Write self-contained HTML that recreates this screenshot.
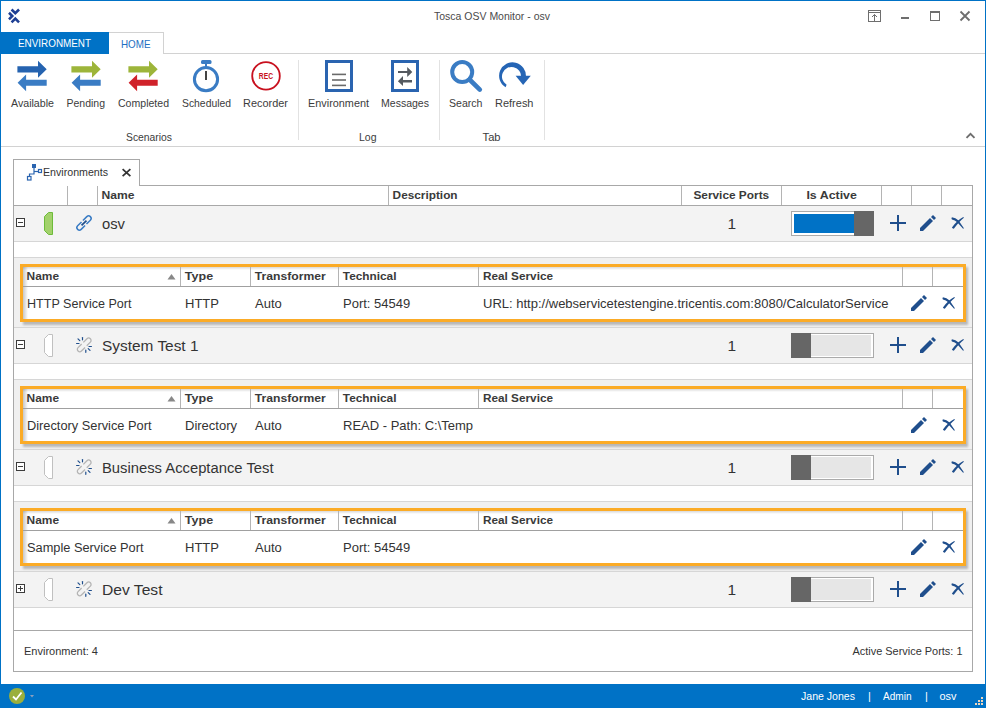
<!DOCTYPE html>
<html><head><meta charset="utf-8"><style>
html,body{margin:0;padding:0;width:986px;height:708px;overflow:hidden;background:#fff}
svg{display:block}
text{font-family:"Liberation Sans", sans-serif}
</style></head><body>
<svg width="986" height="708" viewBox="0 0 986 708">
<defs><filter id="sh" x="-5%" y="-20%" width="110%" height="150%"><feGaussianBlur stdDeviation="1.3"/></filter>
<linearGradient id="gl" x1="0" y1="0" x2="1" y2="0"><stop offset="0" stop-color="#000" stop-opacity="0.22"/><stop offset="1" stop-color="#000" stop-opacity="0"/></linearGradient>
<linearGradient id="gt" x1="0" y1="0" x2="0" y2="1"><stop offset="0" stop-color="#000" stop-opacity="0.15"/><stop offset="1" stop-color="#000" stop-opacity="0"/></linearGradient>
</defs>
<rect x="0" y="0" width="986" height="708" fill="#ffffff" />
<g fill="none" stroke="#1e3f94" stroke-width="2.2" transform="translate(14.6,15.9) scale(1.17) translate(-14.6,-15.9)"><path d="M12,10.4 L15.2,13.6 L18.4,10.4"/><path d="M9.8,13.2 L12.6,16 L9.8,18.8"/><path d="M12,21.4 L15.2,18.2 L18.4,21.4"/></g>
<text x="434" y="20" font-size="11" fill="#4a4a4a" textLength="116" lengthAdjust="spacingAndGlyphs" >Tosca OSV Monitor - osv</text>
<g fill="none" stroke="#6e6e6e" stroke-width="1"><rect x="868.5" y="10.5" width="12" height="11"/><line x1="868.5" y1="12.5" x2="880.5" y2="12.5"/><line x1="874.5" y1="14.5" x2="874.5" y2="21.5"/><path d="M872,17 L874.5,14.5 L877,17"/><rect x="930.5" y="12.5" width="9" height="8"/></g>
<rect x="901" y="17" width="8" height="2" fill="#6e6e6e" />
<rect x="930" y="11" width="10" height="2" fill="#6e6e6e" />
<path d="M960.5,11.5 L969.5,20.5 M969.5,11.5 L960.5,20.5" stroke="#6e6e6e" stroke-width="1.8"/>
<rect x="1" y="32" width="108" height="22" fill="#0072c6" />
<text x="18" y="47" font-size="11" fill="#ffffff" textLength="73" lengthAdjust="spacingAndGlyphs" >ENVIRONMENT</text>
<rect x="164" y="53" width="821" height="1" fill="#d2d2d2"/>
<rect x="163" y="32" width="1" height="22" fill="#d2d2d2"/>
<rect x="109" y="32" width="55" height="1" fill="#d2d2d2"/>
<text x="121" y="48" font-size="11" fill="#1e6fc2" textLength="29.5" lengthAdjust="spacingAndGlyphs" >HOME</text>
<rect x="1" y="146" width="984" height="1" fill="#d2d2d2"/>
<rect x="298" y="60" width="1" height="80" fill="#e2e2e2"/>
<rect x="439" y="60" width="1" height="80" fill="#e2e2e2"/>
<rect x="544" y="60" width="1" height="80" fill="#e2e2e2"/>
<path d="M966.5,137.8 L970.5,133.8 L974.5,137.8" fill="none" stroke="#6e6e6e" stroke-width="1.9"/>
<path transform="translate(17,60)" fill="#2563b0" d="M0.4,6.2 H21 V0.8 L29.7,9.3 L21,17.8 V12.5 H0.4 Z"/>
<path transform="translate(17,60)" fill="#3a7cc4" d="M29.7,19.7 H9.1 V14.4 L0.6,22.7 L9.1,31.3 V25.8 H29.7 Z"/>
<path transform="translate(71,60)" fill="#9db53a" d="M0.4,6.2 H21 V0.8 L29.7,9.3 L21,17.8 V12.5 H0.4 Z"/>
<path transform="translate(71,60)" fill="#3a7cc4" d="M29.7,19.7 H9.1 V14.4 L0.6,22.7 L9.1,31.3 V25.8 H29.7 Z"/>
<path transform="translate(128,60)" fill="#9db53a" d="M0.4,6.2 H21 V0.8 L29.7,9.3 L21,17.8 V12.5 H0.4 Z"/>
<path transform="translate(128,60)" fill="#d0222a" d="M29.7,19.7 H9.1 V14.4 L0.6,22.7 L9.1,31.3 V25.8 H29.7 Z"/>
<circle cx="206" cy="79.2" r="11.6" fill="none" stroke="#3a7cc4" stroke-width="3"/>
<rect x="201" y="60" width="10.5" height="4" rx="1.5" fill="#3a7cc4"/>
<rect x="205" y="63" width="2" height="4" fill="#3a7cc4" />
<rect x="205" y="71" width="2" height="9" fill="#444444" />
<circle cx="266" cy="75.9" r="13.8" fill="none" stroke="#c8101e" stroke-width="1.8"/>
<text x="258.8" y="79" font-size="8.5" fill="#c8101e" font-weight="bold" textLength="14.2" lengthAdjust="spacingAndGlyphs" >REC</text>
<rect x="326.5" y="61.5" width="25" height="29" fill="none" stroke="#2a64b0" stroke-width="3"/>
<g stroke="#6a6a6a" stroke-width="1.6"><line x1="332" y1="74.4" x2="346" y2="74.4"/><line x1="332" y1="80" x2="346" y2="80"/><line x1="332" y1="85.4" x2="346" y2="85.4"/></g>
<rect x="392.5" y="61.5" width="25" height="29" fill="none" stroke="#2a64b0" stroke-width="3"/>
<g fill="#555a60"><path d="M398,71 H407.2 V67 L412.3,72 L407.2,77 V73 H398 Z"/><path d="M412,80 H403 V76 L397.9,81.2 L403,86 V82.6 H412 Z"/></g>
<circle cx="462.2" cy="72.1" r="10" fill="none" stroke="#3a7cc4" stroke-width="4"/>
<path d="M469.5,79.5 L479.8,89.6" stroke="#3a7cc4" stroke-width="4.6" stroke-linecap="round"/>
<path fill="#2565b5" d="M525.85,77 A13.4,13.4 0 1 0 505.6,87.2 L506.6,84.8 A9.6,9.6 0 1 1 521.15,77.2 Z"/><path fill="#2565b5" d="M515.6,75.8 L530.8,75.8 L523.1,84.9 Z"/>
<text x="11" y="107" font-size="11" fill="#3c3c3c" textLength="43" lengthAdjust="spacingAndGlyphs" >Available</text>
<text x="66.5" y="107" font-size="11" fill="#3c3c3c" textLength="38.5" lengthAdjust="spacingAndGlyphs" >Pending</text>
<text x="118" y="107" font-size="11" fill="#3c3c3c" textLength="51" lengthAdjust="spacingAndGlyphs" >Completed</text>
<text x="182" y="107" font-size="11" fill="#3c3c3c" textLength="49" lengthAdjust="spacingAndGlyphs" >Scheduled</text>
<text x="243" y="107" font-size="11" fill="#3c3c3c" textLength="45" lengthAdjust="spacingAndGlyphs" >Recorder</text>
<text x="308" y="107" font-size="11" fill="#3c3c3c" textLength="61" lengthAdjust="spacingAndGlyphs" >Environment</text>
<text x="381" y="107" font-size="11" fill="#3c3c3c" textLength="48" lengthAdjust="spacingAndGlyphs" >Messages</text>
<text x="449" y="107" font-size="11" fill="#3c3c3c" textLength="33.5" lengthAdjust="spacingAndGlyphs" >Search</text>
<text x="495" y="107" font-size="11" fill="#3c3c3c" textLength="38.5" lengthAdjust="spacingAndGlyphs" >Refresh</text>
<text x="126" y="140.6" font-size="11" fill="#3c3c3c" textLength="46" lengthAdjust="spacingAndGlyphs" >Scenarios</text>
<text x="359" y="140.6" font-size="11" fill="#3c3c3c" textLength="17.5" lengthAdjust="spacingAndGlyphs" >Log</text>
<text x="482.6" y="140.6" font-size="11" fill="#3c3c3c" textLength="18" lengthAdjust="spacingAndGlyphs" >Tab</text>
<rect x="13" y="159" width="1" height="513" fill="#a8a8a8"/>
<rect x="13" y="159" width="127" height="1" fill="#a8a8a8"/>
<rect x="139" y="159" width="1" height="27" fill="#a8a8a8"/>
<rect x="139" y="185" width="834" height="1" fill="#a8a8a8"/>
<rect x="972" y="185" width="1" height="487" fill="#a8a8a8"/>
<g fill="none" stroke="#2a64b0" stroke-width="1.2"><path d="M34,168 V174 H29.5 V176.5"/><path d="M34,171.5 H38.5"/><rect x="27.5" y="176.5" width="3.5" height="3.5"/><rect x="38.5" y="169.5" width="3" height="3"/></g>
<rect x="32" y="164" width="4" height="4" fill="#2a64b0" />
<text x="43" y="176" font-size="11" fill="#333" textLength="65" lengthAdjust="spacingAndGlyphs" >Environments</text>
<path d="M122.6,169.2 L130.4,176.2 M130.4,169.2 L122.6,176.2" stroke="#333" stroke-width="1.75"/>
<rect x="13" y="205" width="960" height="1" fill="#a8a8a8"/>
<rect x="67" y="186" width="1" height="19" fill="#b4b4b4"/>
<rect x="97" y="186" width="1" height="19" fill="#b4b4b4"/>
<rect x="388" y="186" width="1" height="19" fill="#b4b4b4"/>
<rect x="681" y="186" width="1" height="19" fill="#b4b4b4"/>
<rect x="781" y="186" width="1" height="19" fill="#b4b4b4"/>
<rect x="881" y="186" width="1" height="19" fill="#b4b4b4"/>
<rect x="911" y="186" width="1" height="19" fill="#b4b4b4"/>
<rect x="941" y="186" width="1" height="19" fill="#b4b4b4"/>
<text x="101.6" y="199" font-size="11" fill="#3a3a3a" font-weight="bold" textLength="33" lengthAdjust="spacingAndGlyphs" >Name</text>
<text x="392.6" y="199" font-size="11" fill="#3a3a3a" font-weight="bold" textLength="65" lengthAdjust="spacingAndGlyphs" >Description</text>
<text x="693.4" y="199" font-size="11" fill="#3a3a3a" font-weight="bold" textLength="75.8" lengthAdjust="spacingAndGlyphs" >Service Ports</text>
<text x="806.4" y="199" font-size="11" fill="#3a3a3a" font-weight="bold" textLength="50.5" lengthAdjust="spacingAndGlyphs" >Is Active</text>
<rect x="14" y="206" width="958" height="35" fill="#f3f3f3" />
<rect x="14" y="241" width="958" height="1" fill="#d6d6d6"/>
<rect x="16.5" y="218.5" width="8" height="8" fill="#fff" stroke="#3c3c3c"/>
<rect x="18" y="222" width="5" height="1" fill="#3c3c3c" />
<path d="M48.5,212.5 H52.5 V234.5 H48.5 L44.5,230.5 V216.5 Z" fill="#a2d16b" stroke="#6dbb3a" stroke-width="1"/>
<g transform="translate(84,223) rotate(-45)" fill="none"><path d="M1,-2.5 H6.5 A2.5,2.5 0 0 1 6.5,2.5 H1" stroke="#3a7cc4" stroke-width="1.5"/><path d="M-1,2.5 H-6.5 A2.5,2.5 0 0 1 -6.5,-2.5 H-1" stroke="#3a7cc4" stroke-width="1.5"/><path d="M-3.5,0 H3.5" stroke="#1f4e8c" stroke-width="1.7"/></g>
<text x="102" y="228.6" font-size="15.5" fill="#333333" textLength="23" lengthAdjust="spacingAndGlyphs" >osv</text>
<text x="731.8" y="229" font-size="15.5" fill="#333333" text-anchor="middle" >1</text>
<rect x="791.5" y="211.5" width="82" height="24" fill="#ffffff" stroke="#aaaaaa"/>
<rect x="794" y="214" width="60" height="19" fill="#0072c6" />
<rect x="854" y="211" width="20" height="25" fill="#666666" />
<rect x="890" y="222" width="16" height="2" fill="#1f4e8c" />
<rect x="897" y="215" width="2" height="16" fill="#1f4e8c" />
<g transform="translate(920,215)" fill="#1f4e8c"><path d="M0,13 L0,16 L3,16 L13,6 L10,3 Z"/><path d="M11,2 L13,0 L16,3 L14,5 Z"/></g>
<g transform="translate(0,0)" fill="#1f4e8c"><path d="M951.9,217.2 Q955.5,217.4 958.6,220.4 L963.9,228.2 L963.1,228.8 L957.2,222.2 Q955,220 951.9,219.5 Q951,218.4 951.9,217.2 Z"/><path d="M963.3,216.9 L963.9,217.7 Q959.5,221 954,228.6 Q952.8,229.2 951.9,227.6 Q956.5,220.5 963.3,216.9 Z"/></g>
<rect x="14" y="257" width="958" height="1" fill="#d6d6d6"/>
<rect x="14" y="258" width="958" height="69" fill="#f0f0f0" />
<rect x="14" y="327" width="958" height="1" fill="#d6d6d6"/>
<rect x="23" y="267" width="945" height="58" fill="#a0a0a0"  filter="url(#sh)" opacity="0.7"/>
<rect x="20" y="264" width="946" height="58" fill="#fbab26" />
<rect x="23" y="267" width="940" height="52" fill="#ffffff" />
<rect x="23" y="267" width="5" height="52" fill="url(#gl)" />
<rect x="23" y="267" width="940" height="3" fill="url(#gt)" />
<rect x="23" y="286" width="940" height="1" fill="#a0a0a0"/>
<rect x="180" y="267" width="1" height="19" fill="#b4b4b4"/>
<rect x="250" y="267" width="1" height="19" fill="#b4b4b4"/>
<rect x="338" y="267" width="1" height="19" fill="#b4b4b4"/>
<rect x="478" y="267" width="1" height="19" fill="#b4b4b4"/>
<rect x="902" y="267" width="1" height="19" fill="#b4b4b4"/>
<rect x="932" y="267" width="1" height="19" fill="#b4b4b4"/>
<text x="26.6" y="280.1" font-size="11" fill="#3a3a3a" font-weight="bold" textLength="32.5" lengthAdjust="spacingAndGlyphs" >Name</text>
<path d="M167.5,279.5 L171.5,274 L175.5,279.5 Z" fill="#888"/>
<text x="184.8" y="280.1" font-size="11" fill="#3a3a3a" font-weight="bold" textLength="28.3" lengthAdjust="spacingAndGlyphs" >Type</text>
<text x="254.8" y="280.1" font-size="11" fill="#3a3a3a" font-weight="bold" textLength="71" lengthAdjust="spacingAndGlyphs" >Transformer</text>
<text x="342.8" y="280.1" font-size="11" fill="#3a3a3a" font-weight="bold" textLength="53.7" lengthAdjust="spacingAndGlyphs" >Technical</text>
<text x="483" y="280.1" font-size="11" fill="#3a3a3a" font-weight="bold" textLength="70" lengthAdjust="spacingAndGlyphs" >Real Service</text>
<text x="27" y="308.3" font-size="12.5" fill="#333333" textLength="104.5" lengthAdjust="spacingAndGlyphs" >HTTP Service Port</text>
<text x="185" y="308.3" font-size="13" fill="#333333" >HTTP</text>
<text x="255" y="308.3" font-size="13" fill="#333333" >Auto</text>
<text x="343" y="308.3" font-size="13" fill="#333333" >Port: 54549</text>
<text x="483" y="308.3" font-size="13" fill="#333333" >URL: http://webservicetestengine.tricentis.com:8080/CalculatorService</text>
<g transform="translate(911,295)" fill="#1f4e8c"><path d="M0,13 L0,16 L3,16 L13,6 L10,3 Z"/><path d="M11,2 L13,0 L16,3 L14,5 Z"/></g>
<g transform="translate(-9,80)" fill="#1f4e8c"><path d="M951.9,217.2 Q955.5,217.4 958.6,220.4 L963.9,228.2 L963.1,228.8 L957.2,222.2 Q955,220 951.9,219.5 Q951,218.4 951.9,217.2 Z"/><path d="M963.3,216.9 L963.9,217.7 Q959.5,221 954,228.6 Q952.8,229.2 951.9,227.6 Q956.5,220.5 963.3,216.9 Z"/></g>
<rect x="14" y="328" width="958" height="35" fill="#f3f3f3" />
<rect x="14" y="363" width="958" height="1" fill="#d6d6d6"/>
<rect x="16.5" y="340.5" width="8" height="8" fill="#fff" stroke="#3c3c3c"/>
<rect x="18" y="344" width="5" height="1" fill="#3c3c3c" />
<path d="M48.5,334.5 H52.5 V356.5 H48.5 L44.5,352.5 V338.5 Z" fill="#ffffff" stroke="#c0c0c0" stroke-width="1"/>
<g transform="translate(84.2,344.9) rotate(-45)" fill="none" stroke="#b4b4b4" stroke-width="1.3"><path d="M1.2,-2.4 H6.3 A2.4,2.4 0 0 1 6.3,2.4 H1.2"/><path d="M-1.2,2.4 H-6.3 A2.4,2.4 0 0 1 -6.3,-2.4 H-1.2"/></g>
<g transform="translate(0,0)" stroke="#1f4e8c" stroke-width="1.2" stroke-linecap="round"><line x1="78" y1="338.8" x2="79.8" y2="340.6"/><line x1="82.5" y1="337.6" x2="82.5" y2="339.8"/><line x1="76.6" y1="343.5" x2="79" y2="343.5"/><line x1="89" y1="346.5" x2="91.4" y2="346.5"/><line x1="88.2" y1="348.6" x2="90" y2="350.4"/><line x1="85.8" y1="350" x2="85.8" y2="352.3"/></g>
<text x="102" y="350.6" font-size="15.5" fill="#333333" textLength="96.5" lengthAdjust="spacingAndGlyphs" >System Test 1</text>
<text x="731.8" y="351" font-size="15.5" fill="#333333" text-anchor="middle" >1</text>
<rect x="791.5" y="333.5" width="82" height="24" fill="#ffffff" stroke="#aaaaaa"/>
<rect x="811" y="335" width="60" height="21" fill="#e6e6e6" />
<rect x="791" y="333" width="20" height="25" fill="#666666" />
<rect x="890" y="344" width="16" height="2" fill="#1f4e8c" />
<rect x="897" y="337" width="2" height="16" fill="#1f4e8c" />
<g transform="translate(920,337)" fill="#1f4e8c"><path d="M0,13 L0,16 L3,16 L13,6 L10,3 Z"/><path d="M11,2 L13,0 L16,3 L14,5 Z"/></g>
<g transform="translate(0,122)" fill="#1f4e8c"><path d="M951.9,217.2 Q955.5,217.4 958.6,220.4 L963.9,228.2 L963.1,228.8 L957.2,222.2 Q955,220 951.9,219.5 Q951,218.4 951.9,217.2 Z"/><path d="M963.3,216.9 L963.9,217.7 Q959.5,221 954,228.6 Q952.8,229.2 951.9,227.6 Q956.5,220.5 963.3,216.9 Z"/></g>
<rect x="14" y="379" width="958" height="1" fill="#d6d6d6"/>
<rect x="14" y="380" width="958" height="69" fill="#f0f0f0" />
<rect x="14" y="449" width="958" height="1" fill="#d6d6d6"/>
<rect x="23" y="389" width="945" height="58" fill="#a0a0a0"  filter="url(#sh)" opacity="0.7"/>
<rect x="20" y="386" width="946" height="58" fill="#fbab26" />
<rect x="23" y="389" width="940" height="52" fill="#ffffff" />
<rect x="23" y="389" width="5" height="52" fill="url(#gl)" />
<rect x="23" y="389" width="940" height="3" fill="url(#gt)" />
<rect x="23" y="408" width="940" height="1" fill="#a0a0a0"/>
<rect x="180" y="389" width="1" height="19" fill="#b4b4b4"/>
<rect x="250" y="389" width="1" height="19" fill="#b4b4b4"/>
<rect x="338" y="389" width="1" height="19" fill="#b4b4b4"/>
<rect x="478" y="389" width="1" height="19" fill="#b4b4b4"/>
<rect x="902" y="389" width="1" height="19" fill="#b4b4b4"/>
<rect x="932" y="389" width="1" height="19" fill="#b4b4b4"/>
<text x="26.6" y="402.1" font-size="11" fill="#3a3a3a" font-weight="bold" textLength="32.5" lengthAdjust="spacingAndGlyphs" >Name</text>
<path d="M167.5,401.5 L171.5,396 L175.5,401.5 Z" fill="#888"/>
<text x="184.8" y="402.1" font-size="11" fill="#3a3a3a" font-weight="bold" textLength="28.3" lengthAdjust="spacingAndGlyphs" >Type</text>
<text x="254.8" y="402.1" font-size="11" fill="#3a3a3a" font-weight="bold" textLength="71" lengthAdjust="spacingAndGlyphs" >Transformer</text>
<text x="342.8" y="402.1" font-size="11" fill="#3a3a3a" font-weight="bold" textLength="53.7" lengthAdjust="spacingAndGlyphs" >Technical</text>
<text x="483" y="402.1" font-size="11" fill="#3a3a3a" font-weight="bold" textLength="70" lengthAdjust="spacingAndGlyphs" >Real Service</text>
<text x="27" y="430.3" font-size="12.5" fill="#333333" textLength="124.5" lengthAdjust="spacingAndGlyphs" >Directory Service Port</text>
<text x="185" y="430.3" font-size="13" fill="#333333" >Directory</text>
<text x="255" y="430.3" font-size="13" fill="#333333" >Auto</text>
<text x="343" y="430.3" font-size="13" fill="#333333" >READ - Path: C:\Temp</text>
<g transform="translate(911,417)" fill="#1f4e8c"><path d="M0,13 L0,16 L3,16 L13,6 L10,3 Z"/><path d="M11,2 L13,0 L16,3 L14,5 Z"/></g>
<g transform="translate(-9,202)" fill="#1f4e8c"><path d="M951.9,217.2 Q955.5,217.4 958.6,220.4 L963.9,228.2 L963.1,228.8 L957.2,222.2 Q955,220 951.9,219.5 Q951,218.4 951.9,217.2 Z"/><path d="M963.3,216.9 L963.9,217.7 Q959.5,221 954,228.6 Q952.8,229.2 951.9,227.6 Q956.5,220.5 963.3,216.9 Z"/></g>
<rect x="14" y="450" width="958" height="35" fill="#f3f3f3" />
<rect x="14" y="485" width="958" height="1" fill="#d6d6d6"/>
<rect x="16.5" y="462.5" width="8" height="8" fill="#fff" stroke="#3c3c3c"/>
<rect x="18" y="466" width="5" height="1" fill="#3c3c3c" />
<path d="M48.5,456.5 H52.5 V478.5 H48.5 L44.5,474.5 V460.5 Z" fill="#ffffff" stroke="#c0c0c0" stroke-width="1"/>
<g transform="translate(84.2,466.9) rotate(-45)" fill="none" stroke="#b4b4b4" stroke-width="1.3"><path d="M1.2,-2.4 H6.3 A2.4,2.4 0 0 1 6.3,2.4 H1.2"/><path d="M-1.2,2.4 H-6.3 A2.4,2.4 0 0 1 -6.3,-2.4 H-1.2"/></g>
<g transform="translate(0,122)" stroke="#1f4e8c" stroke-width="1.2" stroke-linecap="round"><line x1="78" y1="338.8" x2="79.8" y2="340.6"/><line x1="82.5" y1="337.6" x2="82.5" y2="339.8"/><line x1="76.6" y1="343.5" x2="79" y2="343.5"/><line x1="89" y1="346.5" x2="91.4" y2="346.5"/><line x1="88.2" y1="348.6" x2="90" y2="350.4"/><line x1="85.8" y1="350" x2="85.8" y2="352.3"/></g>
<text x="102" y="472.6" font-size="15.5" fill="#333333" textLength="171.5" lengthAdjust="spacingAndGlyphs" >Business Acceptance Test</text>
<text x="731.8" y="473" font-size="15.5" fill="#333333" text-anchor="middle" >1</text>
<rect x="791.5" y="455.5" width="82" height="24" fill="#ffffff" stroke="#aaaaaa"/>
<rect x="811" y="457" width="60" height="21" fill="#e6e6e6" />
<rect x="791" y="455" width="20" height="25" fill="#666666" />
<rect x="890" y="466" width="16" height="2" fill="#1f4e8c" />
<rect x="897" y="459" width="2" height="16" fill="#1f4e8c" />
<g transform="translate(920,459)" fill="#1f4e8c"><path d="M0,13 L0,16 L3,16 L13,6 L10,3 Z"/><path d="M11,2 L13,0 L16,3 L14,5 Z"/></g>
<g transform="translate(0,244)" fill="#1f4e8c"><path d="M951.9,217.2 Q955.5,217.4 958.6,220.4 L963.9,228.2 L963.1,228.8 L957.2,222.2 Q955,220 951.9,219.5 Q951,218.4 951.9,217.2 Z"/><path d="M963.3,216.9 L963.9,217.7 Q959.5,221 954,228.6 Q952.8,229.2 951.9,227.6 Q956.5,220.5 963.3,216.9 Z"/></g>
<rect x="14" y="501" width="958" height="1" fill="#d6d6d6"/>
<rect x="14" y="502" width="958" height="69" fill="#f0f0f0" />
<rect x="14" y="571" width="958" height="1" fill="#d6d6d6"/>
<rect x="23" y="511" width="945" height="58" fill="#a0a0a0"  filter="url(#sh)" opacity="0.7"/>
<rect x="20" y="508" width="946" height="58" fill="#fbab26" />
<rect x="23" y="511" width="940" height="52" fill="#ffffff" />
<rect x="23" y="511" width="5" height="52" fill="url(#gl)" />
<rect x="23" y="511" width="940" height="3" fill="url(#gt)" />
<rect x="23" y="530" width="940" height="1" fill="#a0a0a0"/>
<rect x="180" y="511" width="1" height="19" fill="#b4b4b4"/>
<rect x="250" y="511" width="1" height="19" fill="#b4b4b4"/>
<rect x="338" y="511" width="1" height="19" fill="#b4b4b4"/>
<rect x="478" y="511" width="1" height="19" fill="#b4b4b4"/>
<rect x="902" y="511" width="1" height="19" fill="#b4b4b4"/>
<rect x="932" y="511" width="1" height="19" fill="#b4b4b4"/>
<text x="26.6" y="524.1" font-size="11" fill="#3a3a3a" font-weight="bold" textLength="32.5" lengthAdjust="spacingAndGlyphs" >Name</text>
<path d="M167.5,523.5 L171.5,518 L175.5,523.5 Z" fill="#888"/>
<text x="184.8" y="524.1" font-size="11" fill="#3a3a3a" font-weight="bold" textLength="28.3" lengthAdjust="spacingAndGlyphs" >Type</text>
<text x="254.8" y="524.1" font-size="11" fill="#3a3a3a" font-weight="bold" textLength="71" lengthAdjust="spacingAndGlyphs" >Transformer</text>
<text x="342.8" y="524.1" font-size="11" fill="#3a3a3a" font-weight="bold" textLength="53.7" lengthAdjust="spacingAndGlyphs" >Technical</text>
<text x="483" y="524.1" font-size="11" fill="#3a3a3a" font-weight="bold" textLength="70" lengthAdjust="spacingAndGlyphs" >Real Service</text>
<text x="27" y="552.3" font-size="12.5" fill="#333333" textLength="116.5" lengthAdjust="spacingAndGlyphs" >Sample Service Port</text>
<text x="185" y="552.3" font-size="13" fill="#333333" >HTTP</text>
<text x="255" y="552.3" font-size="13" fill="#333333" >Auto</text>
<text x="343" y="552.3" font-size="13" fill="#333333" >Port: 54549</text>
<g transform="translate(911,539)" fill="#1f4e8c"><path d="M0,13 L0,16 L3,16 L13,6 L10,3 Z"/><path d="M11,2 L13,0 L16,3 L14,5 Z"/></g>
<g transform="translate(-9,324)" fill="#1f4e8c"><path d="M951.9,217.2 Q955.5,217.4 958.6,220.4 L963.9,228.2 L963.1,228.8 L957.2,222.2 Q955,220 951.9,219.5 Q951,218.4 951.9,217.2 Z"/><path d="M963.3,216.9 L963.9,217.7 Q959.5,221 954,228.6 Q952.8,229.2 951.9,227.6 Q956.5,220.5 963.3,216.9 Z"/></g>
<rect x="14" y="572" width="958" height="35" fill="#f3f3f3" />
<rect x="14" y="607" width="958" height="1" fill="#d6d6d6"/>
<rect x="16.5" y="584.5" width="8" height="8" fill="#fff" stroke="#3c3c3c"/>
<rect x="18" y="588" width="5" height="1" fill="#3c3c3c" />
<rect x="20" y="586" width="1" height="5" fill="#3c3c3c" />
<path d="M48.5,578.5 H52.5 V600.5 H48.5 L44.5,596.5 V582.5 Z" fill="#ffffff" stroke="#c0c0c0" stroke-width="1"/>
<g transform="translate(84.2,588.9) rotate(-45)" fill="none" stroke="#b4b4b4" stroke-width="1.3"><path d="M1.2,-2.4 H6.3 A2.4,2.4 0 0 1 6.3,2.4 H1.2"/><path d="M-1.2,2.4 H-6.3 A2.4,2.4 0 0 1 -6.3,-2.4 H-1.2"/></g>
<g transform="translate(0,244)" stroke="#1f4e8c" stroke-width="1.2" stroke-linecap="round"><line x1="78" y1="338.8" x2="79.8" y2="340.6"/><line x1="82.5" y1="337.6" x2="82.5" y2="339.8"/><line x1="76.6" y1="343.5" x2="79" y2="343.5"/><line x1="89" y1="346.5" x2="91.4" y2="346.5"/><line x1="88.2" y1="348.6" x2="90" y2="350.4"/><line x1="85.8" y1="350" x2="85.8" y2="352.3"/></g>
<text x="102" y="594.6" font-size="15.5" fill="#333333" textLength="60.5" lengthAdjust="spacingAndGlyphs" >Dev Test</text>
<text x="731.8" y="595" font-size="15.5" fill="#333333" text-anchor="middle" >1</text>
<rect x="791.5" y="577.5" width="82" height="24" fill="#ffffff" stroke="#aaaaaa"/>
<rect x="811" y="579" width="60" height="21" fill="#e6e6e6" />
<rect x="791" y="577" width="20" height="25" fill="#666666" />
<rect x="890" y="588" width="16" height="2" fill="#1f4e8c" />
<rect x="897" y="581" width="2" height="16" fill="#1f4e8c" />
<g transform="translate(920,581)" fill="#1f4e8c"><path d="M0,13 L0,16 L3,16 L13,6 L10,3 Z"/><path d="M11,2 L13,0 L16,3 L14,5 Z"/></g>
<g transform="translate(0,366)" fill="#1f4e8c"><path d="M951.9,217.2 Q955.5,217.4 958.6,220.4 L963.9,228.2 L963.1,228.8 L957.2,222.2 Q955,220 951.9,219.5 Q951,218.4 951.9,217.2 Z"/><path d="M963.3,216.9 L963.9,217.7 Q959.5,221 954,228.6 Q952.8,229.2 951.9,227.6 Q956.5,220.5 963.3,216.9 Z"/></g>
<rect x="13" y="630" width="960" height="1" fill="#a8a8a8"/>
<rect x="13" y="671" width="960" height="1" fill="#a8a8a8"/>
<text x="24" y="655" font-size="11" fill="#333333" >Environment: 4</text>
<text x="852.5" y="655" font-size="11" fill="#333333" textLength="110" lengthAdjust="spacingAndGlyphs" >Active Service Ports: 1</text>
<rect x="0" y="0" width="1" height="708" fill="#0072c6"/>
<rect x="985" y="0" width="1" height="708" fill="#0072c6"/>
<rect x="0" y="0" width="986" height="1" fill="#0072c6"/>
<rect x="0" y="684" width="986" height="24" fill="#0072c6" />
<circle cx="17" cy="696" r="8" fill="#9aaf3c"/>
<path d="M13,696.5 L16,699.5 L21.5,692.5" fill="none" stroke="#fff" stroke-width="1.8"/>
<path d="M30,695 L34,695 L32,697.5 Z" fill="#8a9fbf"/>
<text x="801" y="700" font-size="11" fill="#ffffff" textLength="54" lengthAdjust="spacingAndGlyphs" >Jane Jones</text>
<text x="868" y="700" font-size="11" fill="#ffffff" >|</text>
<text x="883" y="700" font-size="11" fill="#ffffff" textLength="28.5" lengthAdjust="spacingAndGlyphs" >Admin</text>
<text x="925" y="700" font-size="11" fill="#ffffff" >|</text>
<text x="939.5" y="700" font-size="11" fill="#ffffff" textLength="17" lengthAdjust="spacingAndGlyphs" >osv</text>
<g fill="#efd6ba"><rect x="981" y="697" width="2" height="2"/><rect x="978" y="700" width="2" height="2"/><rect x="981" y="700" width="2" height="2"/><rect x="975" y="703" width="2" height="2"/><rect x="978" y="703" width="2" height="2"/><rect x="981" y="703" width="2" height="2"/></g>
</svg>
</body></html>
